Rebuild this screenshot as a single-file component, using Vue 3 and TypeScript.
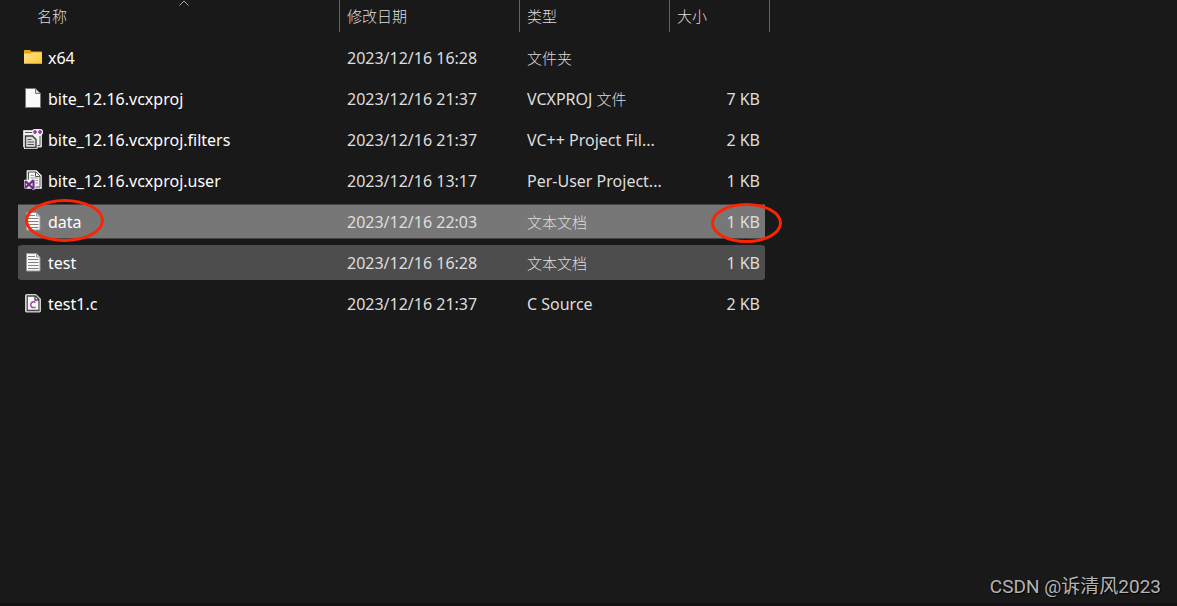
<script setup lang="ts">
type IconKind = 'folder' | 'blank' | 'filters' | 'user' | 'text' | 'csource'

interface Entry {
  name: string
  icon: IconKind
  modified: string
  kind: string
  size: string
  state?: 'selected' | 'hovered'
  marked?: boolean
}

const entries: Entry[] = [
  { name: 'x64', icon: 'folder', modified: '2023/12/16 16:28', kind: '文件夹', size: '' },
  { name: 'bite_12.16.vcxproj', icon: 'blank', modified: '2023/12/16 21:37', kind: 'VCXPROJ 文件', size: '7 KB' },
  { name: 'bite_12.16.vcxproj.filters', icon: 'filters', modified: '2023/12/16 21:37', kind: 'VC++ Project Fil...', size: '2 KB' },
  { name: 'bite_12.16.vcxproj.user', icon: 'user', modified: '2023/12/16 13:17', kind: 'Per-User Project...', size: '1 KB' },
  { name: 'data', icon: 'text', modified: '2023/12/16 22:03', kind: '文本文档', size: '1 KB', state: 'selected', marked: true },
  { name: 'test', icon: 'text', modified: '2023/12/16 16:28', kind: '文本文档', size: '1 KB', state: 'hovered' },
  { name: 'test1.c', icon: 'csource', modified: '2023/12/16 21:37', kind: 'C Source', size: '2 KB' },
]

// Splits a label so that Han characters can be set slightly smaller than Latin ones.
function runs(label: string): { text: string; han: boolean }[] {
  return (label.match(/[\u4e00-\u9fff]+|[^\u4e00-\u9fff]+/g) ?? []).map((text) => ({
    text,
    han: /[\u4e00-\u9fff]/.test(text),
  }))
}
</script>

<template>
  <main class="explorer">
    <table class="files">
      <colgroup>
        <col class="col-name" />
        <col class="col-date" />
        <col class="col-kind" />
        <col class="col-size" />
        <col class="col-end" />
      </colgroup>
      <thead>
        <tr>
          <th scope="col" aria-sort="ascending">
            <button type="button" class="head head-name">
              名称
              <svg class="sort" viewBox="0 0 10 6" aria-hidden="true"><path d="M0.5 5.5 5 1l4.500 4.500" /></svg>
            </button>
          </th>
          <th scope="col"><button type="button" class="head">修改日期</button></th>
          <th scope="col"><button type="button" class="head">类型</button></th>
          <th scope="col" colspan="2"><button type="button" class="head">大小</button></th>
        </tr>
      </thead>
      <tbody>
        <tr v-for="entry in entries" :key="entry.name" :class="entry.state">
          <td class="name">
            <div class="label">
              <svg v-if="entry.icon === 'folder'" class="icon" viewBox="0 0 20 20" aria-hidden="true">
                <defs>
                  <linearGradient id="folder-face" x1="0" y1="0" x2="1" y2="1">
                    <stop offset="0" stop-color="#ffe391" />
                    <stop offset="1" stop-color="#fdc634" />
                  </linearGradient>
                </defs>
                <path d="M1 3.500Q1 3 1.500 3H7l1.500 1.500H18.500Q19 4.500 19 5v4H1z" fill="#eda50d" />
                <path d="M1 6.500H7.500L9 5.500H19V16.500H1z" fill="url(#folder-face)" />
                <path d="M1 16.500H19" stroke="#d9a02c" />
              </svg>
              <svg v-else-if="entry.icon === 'blank'" class="icon" viewBox="0 0 20 20" aria-hidden="true">
                <path d="M2.500.5h10l5 5v14h-15z" fill="#fafafa" stroke="#77777a" />
                <path d="M12.500.5v5h5z" fill="#d8d8d8" stroke="#77777a" />
              </svg>
              <svg v-else-if="entry.icon === 'filters'" class="icon" viewBox="0 0 20 20" aria-hidden="true">
                <path d="M.5 1.500h18v16.500H.5z" fill="#f3f3f3" stroke="#cfcfcf" />
                <path d="M2 3.500h8M13.500 16.500h3.500V7" fill="none" stroke="#555" />
                <path d="M1 5.500h9.500l4 4V20H1z" fill="#f0f0f0" />
                <path d="M2.500 7h7l3.500 3.500V18.500H2.500z" fill="#ddd" stroke="#3e3e3e" stroke-width="1.400" />
                <path d="M4.500 10.500h4M4.500 13h6.500M4.500 15.500h6.500" stroke="#555" />
                <rect x="9" y="0" width="11" height="6" rx="2.500" fill="#eee8ef" />
                <path d="M10 3h4M12 1v4M15 3h4M17 1v4" stroke="#873d91" stroke-width="1.500" />
              </svg>
              <svg v-else-if="entry.icon === 'user'" class="icon" viewBox="0 0 20 20" aria-hidden="true">
                <path d="M4 .5h9.500L18.500 5.500v13H4z" fill="#f4f4f4" stroke="#c5c5c5" />
                <path d="M5.500 9.500V2H13l4 4v11H11M12.500 2v4.500H17" fill="none" stroke="#565656" />
                <path d="M7.500 5.500h3.500M7.500 8h7.500M12 10.500h3M12 13h3" stroke="#999" />
                <path d="M1 10l2-.5 3 2.500 4-3.500 2.500 1v9.500L10 20l-4-3.500L3 19l-2-1z" fill="#eee8f1" />
                <path fill-rule="evenodd" d="M1.500 11l1.500-.5 3 2.500 3.500-3.500 2 1v8l-2 1L6 16l-3 2.500-1.500-.5zM2.800 13v3l1.500-1.500zM9.500 12.500l-2 2 2 2z" fill="#702b84" />
              </svg>
              <svg v-else-if="entry.icon === 'text'" class="icon" viewBox="0 0 20 20" aria-hidden="true">
                <path d="M3.500 1.500h10l3.500 3.500v14H3.500z" fill="#f7f7f7" stroke="#999" />
                <path d="M13.500 1.500V5H17z" fill="#ddd" stroke="#999" />
                <path d="M5 4.500h7M5 7.500h10.500M5 10.500h10.500M5 13.500h10.500M5 16.500h10.500" stroke="#818181" />
              </svg>
              <svg v-else class="icon" viewBox="0 0 20 20" aria-hidden="true">
                <path d="M3.500 1.500h9.500l4.500 4.500v12q0 1-1 1H3.500q-1 0-1-1v-15.500q0-1 1-1z" fill="#f5f5f5" stroke="#cfcfcf" />
                <path d="M4.200 3h8.300L16 6.500v11H4.200zM12 3v4h4" fill="none" stroke="#484848" stroke-width="1.300" />
                <path d="M12.500 9.200Q8 8 7.700 11.700 8 15.400 12.500 14.300" fill="none" stroke="#a04dac" stroke-width="1.600" />
              </svg>
              <span>{{ entry.name }}</span>
              <i v-if="entry.marked" class="ring ring-name" aria-hidden="true"></i>
            </div>
          </td>
          <td>{{ entry.modified }}</td>
          <td>
            <span v-for="(run, i) in runs(entry.kind)" :key="i" :class="{ han: run.han }">{{ run.text }}</span>
          </td>
          <td class="size">
            <div class="amount">
              {{ entry.size }}
              <i v-if="entry.marked" class="ring ring-size" aria-hidden="true"></i>
            </div>
          </td>
        </tr>
      </tbody>
    </table>
    <footer class="credit">CSDN @诉清风2023</footer>
  </main>
</template>

<style>
body {
  margin: 0;
  background: #191919;
}
</style>

<style scoped>
.explorer {
  display: flex;
  flex-direction: column;
  box-sizing: border-box;
  min-height: 100vh;
  padding-left: 18px;
  background: #191919;
  border-bottom: 3px solid #140f14;
  color: #dedede;
  font: 16px/20px "Noto Sans", "Noto Sans CJK SC", sans-serif;
}

.files {
  width: 752px;
  table-layout: fixed;
  border-collapse: separate;
  border-spacing: 0;
}

.col-name { width: 322px; }
.col-date { width: 180px; }
.col-kind { width: 150px; }
.col-size { width: 95px; }
.col-end { width: 5px; }

th {
  padding: 0 0 5px;
}

.head {
  position: relative;
  display: block;
  box-sizing: border-box;
  width: 100%;
  height: 32px;
  padding: 0 7px;
  border: 0;
  border-right: 1px solid #636363;
  background: none;
  color: inherit;
  font: 300 15px/32px "Noto Sans CJK SC", sans-serif;
  text-align: left;
}

.head-name {
  padding-left: 19px;
}

.sort {
  position: absolute;
  top: 0;
  left: 161px;
  width: 10px;
  height: 6px;
  fill: none;
  stroke: #aaa;
}

td {
  box-sizing: border-box;
  height: 41px;
  padding: 0 7px;
  border: 0 solid transparent;
  border-width: 3px 0;
  background-clip: padding-box;
  white-space: nowrap;
}

.name {
  padding-left: 5px;
  color: #fff;
}

.label {
  position: relative;
  display: flex;
  align-items: center;
  gap: 5px;
}

.icon {
  width: 20px;
  height: 20px;
  margin-bottom: 2px;
}

.han {
  font: 300 15px/20px "Noto Sans CJK SC", sans-serif;
}

.size {
  padding-right: 5px;
  text-align: right;
}

.amount {
  position: relative;
}

.selected td {
  background-color: #777;
  box-shadow: inset 0 1px #444, inset 0 -1px #444;
}

.hovered td {
  background-color: #4d4d4d;
}

.hovered td:first-child {
  border-radius: 5px 0 0 5px;
}

.hovered td:last-child {
  border-radius: 0 5px 5px 0;
}

.ring {
  position: absolute;
  box-sizing: border-box;
  border: 3px solid #fb2505;
  border-radius: 50%;
}

.ring-name {
  top: -12px;
  left: 2px;
  width: 79px;
  height: 43px;
}

.ring-size {
  top: -9px;
  right: -22px;
  width: 71px;
  height: 40px;
}

.credit {
  margin: auto 16px 4px auto;
  color: #b4b4b4;
  font: 19px/24px Roboto, "Noto Sans CJK SC", sans-serif;
  text-shadow: 1px 1px 1px #000;
}
</style>
